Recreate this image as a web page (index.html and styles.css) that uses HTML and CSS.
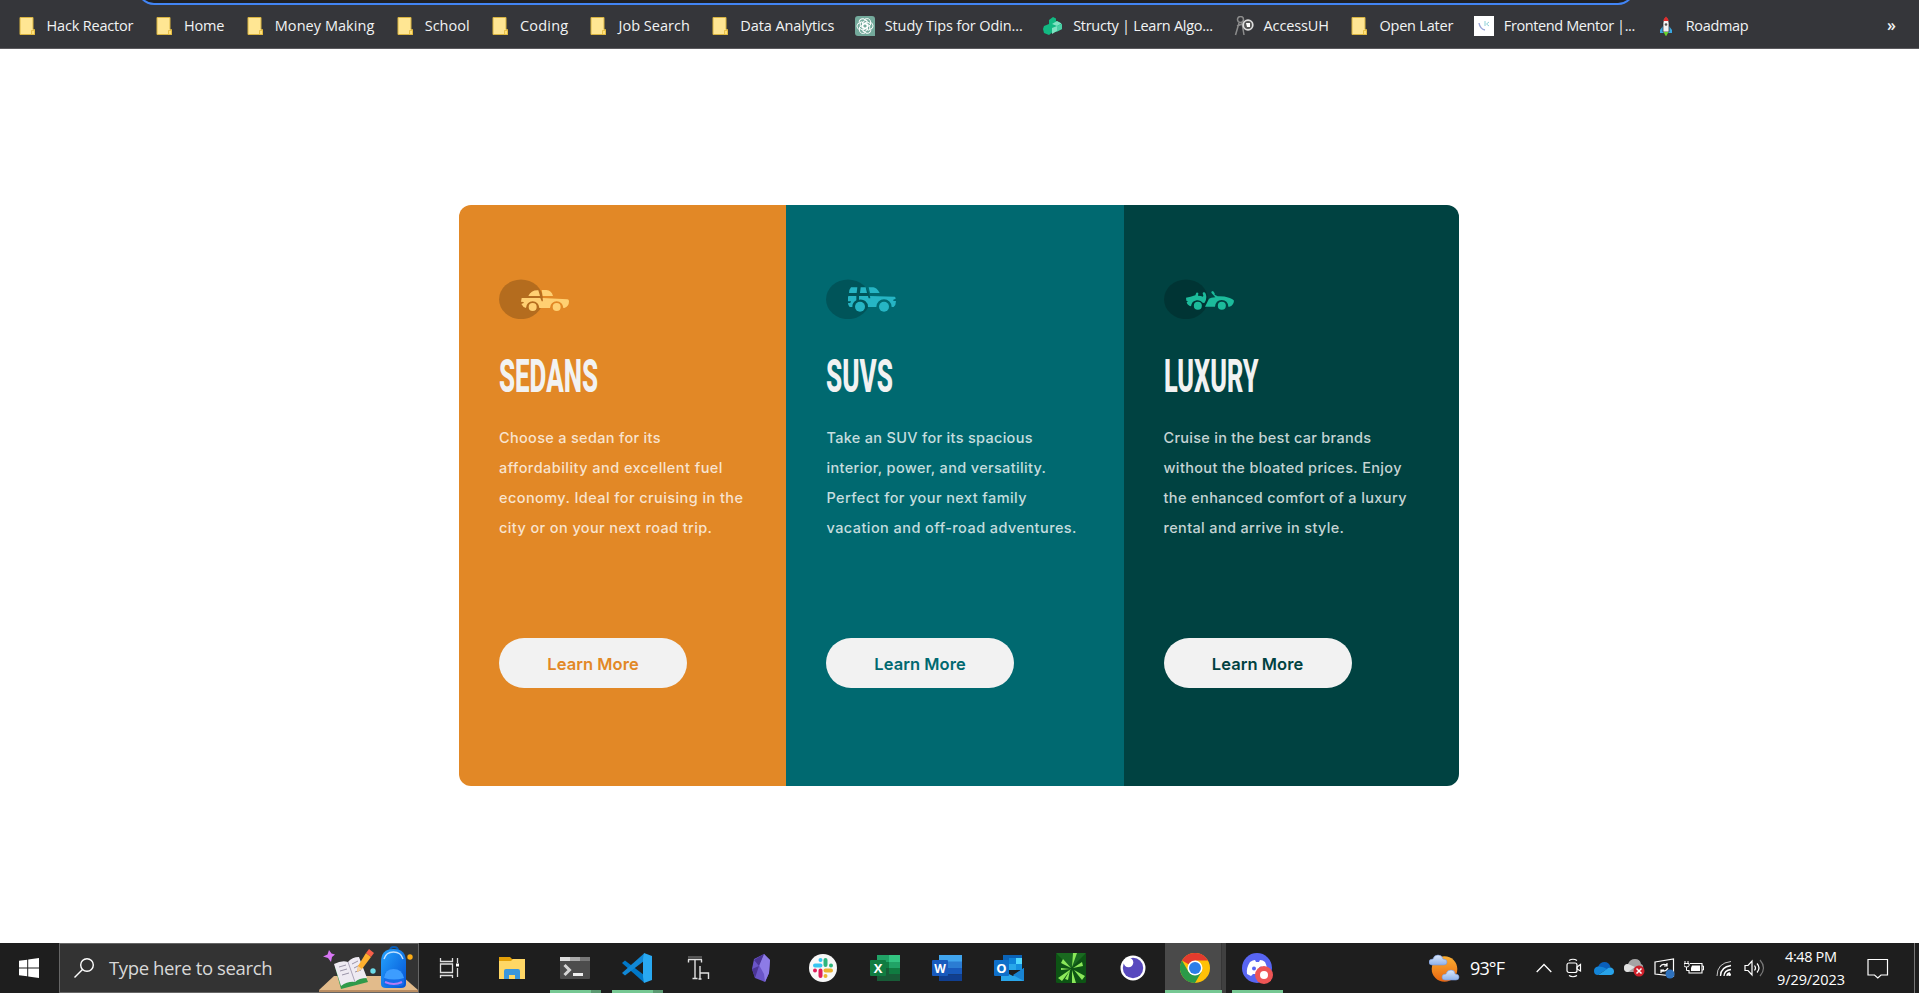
FILE: index.html
```html
<!DOCTYPE html>
<html lang="en">
<head>
<meta charset="utf-8">
<title>3-column preview card</title>
<link rel="stylesheet" href="styles.css">
</head>
<body>
<svg class="defs" width="0" height="0">
  <defs>
    <symbol id="folder" viewBox="0 0 20 20"><path d="M3 1.5h13v12h1.5v5H3z" fill="#ffe693" stroke="#d9b441"/><path d="M14.5 18.5v-4h3v4z" fill="#ffe07a" stroke="#e3b93a" stroke-width=".8"/></symbol>
    <linearGradient id="sun" x1="0" y1="0" x2="0" y2="1"><stop offset="0" stop-color="#fbb034"/><stop offset="1" stop-color="#e8650f"/></linearGradient>
    <linearGradient id="pack" x1="0" y1="0" x2="1" y2="1"><stop offset="0" stop-color="#25a4ff"/><stop offset="1" stop-color="#0452d4"/></linearGradient>
    <linearGradient id="cl" x1="0" y1="0" x2="0" y2="1"><stop offset="0" stop-color="#dce9fb"/><stop offset="1" stop-color="#8fb2ea"/></linearGradient>
  </defs>
</svg>

<header class="browser">
  <div class="urlstrip"><div class="urlbar"></div></div>
  <nav class="bookmarks">
    <a class="bm"><svg class="bi"><use href="#folder"/></svg><span data-w="87">Hack Reactor</span></a>
    <a class="bm"><svg class="bi"><use href="#folder"/></svg><span data-w="40.5">Home</span></a>
    <a class="bm"><svg class="bi"><use href="#folder"/></svg><span data-w="99.5">Money Making</span></a>
    <a class="bm"><svg class="bi"><use href="#folder"/></svg><span data-w="45">School</span></a>
    <a class="bm"><svg class="bi"><use href="#folder"/></svg><span data-w="48">Coding</span></a>
    <a class="bm"><svg class="bi"><use href="#folder"/></svg><span data-w="71.500">Job Search</span></a>
    <a class="bm"><svg class="bi"><use href="#folder"/></svg><span data-w="94">Data Analytics</span></a>
    <a class="bm"><svg class="bi" viewBox="0 0 20 20"><path d="M3 0h14q3 0 3 3v17H3q-3 0-3-3V3q0-3 3-3z" fill="#74aa9c"/><g fill="none" stroke="#fff" stroke-width=".9"><path id="petal" d="M10 3q4-1.500 5.500 2v4L10 12.500 7.500 11V6l3.500-2"/><use href="#petal" transform="rotate(60 10 10)"/><use href="#petal" transform="rotate(120 10 10)"/><use href="#petal" transform="rotate(180 10 10)"/><use href="#petal" transform="rotate(240 10 10)"/><use href="#petal" transform="rotate(300 10 10)"/></g></svg><span data-w="138">Study Tips for Odin...</span></a>
    <a class="bm"><svg class="bi" viewBox="0 0 20 20"><path d="M6 4l4-3 3 1.500V5l4 1.500 2 2V13l-6 3-2-1-5 4-5-2-1-4 1-3 5-2z" fill="#12b982"/><path d="M9 8l5-3 4.500 2.500L14 10zM9 12l5-2v5l-5 3z" fill="#7fe3c2"/><path d="M14 10l5-2v5l-5 2.500z" fill="#4ccfa5"/></svg><span data-w="140">Structy | Learn Algo...</span></a>
    <a class="bm"><svg class="bi" viewBox="0 0 20 20"><g fill="none" stroke="#8c8c8c" stroke-width="1.500"><circle cx="6.500" cy="3.500" r="3"/><path d="M5 7L1.500 19M8 7l2 12M3 10l5-2"/></g><circle cx="14" cy="9" r="4.800" fill="#555" stroke="#ddd" stroke-width="1.700"/><path d="M12 7l1 4h3V7z" fill="#fff"/></svg><span data-w="65.500">AccessUH</span></a>
    <a class="bm"><svg class="bi"><use href="#folder"/></svg><span data-w="74">Open Later</span></a>
    <a class="bm"><svg class="bi" viewBox="0 0 20 20"><path d="M0 0h20v20H0z" fill="#fff"/><path d="M5 7q1 6 6 7" fill="none" stroke="#9aa5d8" stroke-width="1.400"/><path d="M11 5v5m4-4l-2.500 2 2.500 2" fill="none" stroke="#8fd0d8"/></svg><span data-w="131.500">Frontend Mentor |...</span></a>
    <a class="bm"><svg class="bi" viewBox="0 0 20 20"><path d="M7 10l-3 4v3h12v-3l-3-4z" fill="#39a6e0"/><path d="M7 16V7q0-4 3-6 3 2 3 6v9z" fill="#f2f2f2" stroke="#222" stroke-width=".7"/><path d="M7.300 5q.7-3 2.700-4.500Q12 2 12.700 5z" fill="#e02b2b"/><circle cx="10" cy="8.500" r="1.300" fill="#555"/><path d="M7.500 16h5L10 20.500z" fill="#69d32e"/></svg><span data-w="63">Roadmap</span></a>
    <span class="more">»</span>
  </nav>
</header>

<main class="page">
  <div class="cards">
    <section class="card sedan">
      <svg class="car" viewBox="0 0 213 120"><ellipse cx="66" cy="61" rx="66" ry="59.500" fill="#000" opacity=".2"/>
        <g fill="#ffd072"><path d="M88 51Q96 34 115 34h3l5 17zM128 33h14q16 2 20 18h-31z"/><path d="M68 57h56l4 10h4l-1-10 74 4q5 0 5 6 0 16-14 20h-3a20 20 0 0 0-40 0h-32a20 20 0 0 0-40 0q-9-2-14-12l7-3v-3l-8-1z"/><circle cx="101" cy="84" r="12"/><circle cx="173" cy="84" r="12"/></g></svg>
      <h2 class="title"><span data-squeeze="99">SEDANS</span></h2>
      <p class="text"><span data-w="161.500">Choose a sedan for its</span><span data-w="223.500">affordability and excellent fuel</span><span data-w="244">economy. Ideal for cruising in the</span><span data-w="213">city or on your next road trip.</span></p>
      <button class="btn"><span data-w="91.500">Learn More</span></button>
    </section>
    <section class="card suv">
      <svg class="car" viewBox="0 0 213 120"><ellipse cx="66" cy="61" rx="66" ry="59.500" fill="#000" opacity=".2"/>
        <g fill="#26b5c4"><path d="M69 42q1-12 6-17h19l-2 17zM102 42l2-17h15l4 17zM128 25h14q10 1 19 17h-29z"/><path d="M67 51h24v13a22 22 0 0 0-12 20h-8q-5-4-5-12h6q3-2 3-5h-9v-12zM99 51h27l2 7h5l-1-7 74 2q3 1 3 6l-7 3v4h8q0 12-7 18h-6a22 22 0 0 0-46 0h-25a22 22 0 0 0-27-22z"/><circle cx="102" cy="83" r="15"/><circle cx="174" cy="83" r="15"/></g></svg>
      <h2 class="title"><span data-squeeze="67">SUVS</span></h2>
      <p class="text"><span data-w="206">Take an SUV for its spacious</span><span data-w="219.500">interior, power, and versatility.</span><span data-w="200">Perfect for your next family</span><span data-w="250">vacation and off-road adventures.</span></p>
      <button class="btn"><span data-w="91.500">Learn More</span></button>
    </section>
    <section class="card luxury">
      <svg class="car" viewBox="0 0 213 120"><ellipse cx="66" cy="61" rx="66" ry="59.500" fill="#000" opacity=".2"/>
        <g fill="#1cbb9b"><path d="M66 56q13-1 28-7l3-8q4-1 6 1l-1 8q9 0 15 3l1-4-2-5q0-5 5-4 5 2 6 14 0 9-5 17l-5 1q-8-10-19-8-15 2-17 18-11-3-13-12l4-3-5-2z"/><path d="M123 83l12-24q5-3 19-4l-12-14q-1-5 5-5l5 7v4l9 5q18-1 34 4 13 4 15 9-1 14-14 18h-3q-1-19-20-20-18 1-20 20z"/><circle cx="101.500" cy="80.500" r="12"/><circle cx="173.500" cy="80.500" r="12"/></g></svg>
      <h2 class="title"><span data-squeeze="94.500">LUXURY</span></h2>
      <p class="text"><span data-w="207.500">Cruise in the best car brands</span><span data-w="238">without the bloated prices. Enjoy</span><span data-w="243">the enhanced comfort of a luxury</span><span data-w="180.500">rental and arrive in style.</span></p>
      <button class="btn"><span data-w="91.500">Learn More</span></button>
    </section>
  </div>
</main>

<footer class="taskbar">
  <div class="start"><svg width="20" height="20" viewBox="0 0 20 20" fill="#fff"><path d="M0 2.800l8.200-1.100v7.800H0zM9.200 1.500L20 0v9.500H9.200zM0 10.500h8.200v7.800L0 17.200zM9.200 10.500H20V20L9.200 18.500z"/></svg></div>
  <div class="search">
    <svg width="20" height="20" viewBox="0 0 20 20" fill="none" stroke="#fff" stroke-width="1.400"><circle cx="13" cy="7" r="6.300"/><path d="M8.500 11.500L.5 19.500"/></svg>
    <span class="stext" data-w="163.500">Type here to search</span>
    <svg class="art" width="99" height="48" viewBox="0 0 99 48">
      <path d="M0 46L15 32h68l16 14v2H0z" fill="#e2bb8b"/><path d="M0 46h99v2H0z" fill="#b98d62"/>
      <path d="M10 6l2.500 3.500 3.500 1-3 2.500-1 5-3-4-5-1.500 4.500-2z" fill="#d977f5"/>
      <path d="M16 23l12-4 11-5 10 24-27 7z" fill="#2f9a4a"/>
      <path d="M15 20q8-4 14-2 4-5 11-5l8 21q-8 0-12 4-7-1-14 4z" fill="#eeeaf2"/><path d="M29 18l7 20" stroke="#aaa3b8"/><path d="M20 23l7-2M21 27l7-2M23 31l7-2M33 20l6-3M35 24l6-3M36 28l6-2" stroke="#9a94a8"/>
      <path d="M39 22L47 9l5 4-9 12-5 3z" fill="#ffb02e"/><path d="M47 9l3-4 5 4-3 4z" fill="#f8604a"/><path d="M39 22l4 3-5 3z" fill="#f5d0a2"/>
      <circle cx="54" cy="27" r="2.700" fill="#6cdbe8"/><circle cx="91" cy="13" r="2.700" fill="#ffad14"/>
      <path d="M71 7q0-4 4-4t4 4" fill="none" stroke="#075bb5" stroke-width="2"/>
      <path d="M62 18q0-13 12.500-13T87 18v22q0 4-5 4H67q-5 0-5-4z" fill="url(#pack)"/><path d="M65 15q2-7 9.500-7T84 15" fill="none" stroke="#bfe0ff" stroke-width="1.400"/>
      <path d="M65 35q0-10 9.500-10T85 35v4q0 3-4 3H69q-4 0-4-3z" fill="#126be9"/><path d="M65 34q1-9 9.500-9T85 34q-10 3-20 0z" fill="#3d9dff"/><path d="M66 38q9 4 17 0" fill="none" stroke="#b57cf5" stroke-width="2"/>
    </svg>
  </div>
  <div class="apps">
    <div class="app view"><svg width="22" height="20" viewBox="0 0 22 20" stroke="#ddd" fill="none" stroke-width="1.300"><path d="M1.500 0v3.500h12V0M1.500 6h12v8.500h-12zM1.500 20v-2.500h12V20M18.500 0v5M18.500 10v9"/><path d="M17 5.500h3v3h-3z" fill="#fff" stroke="none"/></svg></div>
    <div class="app"><svg width="28" height="24" viewBox="0 0 28 24"><path d="M0 1h11l2 2h13v4H0z" fill="#e3a008"/><path d="M0 5h12l2-2h12v20H0z" fill="#ffd765"/><path d="M5 23v-8q0-2 2-2h12q2 0 2 2v8h-5v-4h-6v4z" fill="#3a96dd"/></svg></div>
    <div class="app on"><svg width="30" height="22" viewBox="0 0 30 22"><rect width="30" height="22" rx="1" fill="#4c4c4c"/><path d="M0 0h10v4H0z" fill="#ddd"/><path d="M10 0h10v4H10z" fill="#aaa"/><path d="M20 0h10v4H20z" fill="#777"/><path d="M4.500 8l5 5-5 5" fill="none" stroke="#d5d5d5" stroke-width="3"/><path d="M13 16h10v3H13z" fill="#eee"/></svg></div>
    <div class="app on"><svg width="30" height="30" viewBox="0 0 30 30"><path d="M0 10l3-2.500L22 22v7.500z" fill="#0078c8"/><path d="M0 20l3 2.500L22 8V.500z" fill="#1188d6"/><path d="M22 0l8 3v24l-8 3-1-6V6z" fill="#29a9f2"/></svg></div>
    <div class="app"><svg width="24" height="25" viewBox="0 0 24 25"><path d="M1 1h14" stroke="#555" stroke-width="2"/><path d="M1 3.500h14M8 4v18M5.500 22.500h5M1.500 3.500v3M14.500 3.500v3M13 10v13M13 17h8.500v6M11.500 23h3" fill="none" stroke="#e1e1e1" stroke-width="1.400"/></svg></div>
    <div class="app"><svg width="18" height="28" viewBox="0 0 18 28"><path d="M12 0l6 6-1 13-4 9-10-4-3-9 2-10z" fill="#6a55c8"/><path d="M12 0l6 6-1 13-4 9-1-8-5-9z" fill="#8d7be6"/><path d="M12 0L2 6l5 6zM0 15l7-3-4 12z" fill="#4b3597"/></svg></div>
    <div class="app"><svg width="28" height="28" viewBox="0 0 28 28"><circle cx="14" cy="14" r="14" fill="#f8f8f8"/><g stroke-width="4" stroke-linecap="round"><path d="M11.500 6v.1M6 11.500h5.500" stroke="#36c5f0"/><path d="M16.500 6v5M22 11.500v.1" stroke="#2eb67d"/><path d="M16.500 16.500H22M16.500 22v.1" stroke="#ecb22e"/><path d="M6 16.500v.1M11.500 16.500V22" stroke="#e01e5a"/></g></svg></div>
    <div class="app"><svg width="30" height="26" viewBox="0 0 30 26"><path d="M7 0h23v26H7z" fill="#185c37"/><path d="M7 0h12v7H7z" fill="#21a366"/><path d="M19 0h11v7H19z" fill="#33c481"/><path d="M7 7h12v6H7z" fill="#107c41"/><path d="M19 7h11v6H19z" fill="#21a366"/><path d="M19 13h11v6H19z" fill="#107c41"/><rect y="5" width="16" height="16" rx="1" fill="#107c41"/><text class="glyph" x="8" y="17.500" font-size="13">X</text></svg></div>
    <div class="app"><svg width="30" height="26" viewBox="0 0 30 26"><path d="M7 0h23v7H7z" fill="#41a5ee"/><path d="M7 6.500h23V13H7z" fill="#2b7cd3"/><path d="M7 13h23v6.500H7z" fill="#185abd"/><path d="M7 19.500h23V26H7z" fill="#103f91"/><rect y="5" width="16" height="16" rx="1" fill="#185abd"/><text class="glyph" x="8" y="17.500" font-size="12">W</text></svg></div>
    <div class="app"><svg width="30" height="26" viewBox="0 0 30 26"><path d="M9 0h19v15H9z" fill="#0a63b8"/><path d="M15 3h7v6h-7z" fill="#0f84da"/><path d="M22 3h6v6h-6z" fill="#50d9ff"/><path d="M15 9h7v6h-7z" fill="#28a8ea"/><path d="M22 9h6v6h-6z" fill="#1490df"/><path d="M7 15l12 6 11-8v13H7z" fill="#2aa6ea"/><path d="M19 20l11-7v13z" fill="#1883d2"/><rect y="5" width="15" height="16" rx="1" fill="#0f6fc9"/><text class="glyph" x="7.500" y="17.500" font-size="13">O</text></svg></div>
    <div class="app"><svg width="30" height="30" viewBox="0 0 30 30"><rect width="30" height="30" rx="1.500" fill="#0d5414"/><path d="M0 0h30L15 15z" fill="#1a6a20"/><g fill="#8be85a"><path d="M16 14L17 0h4zM15 15L7 6l-2 4zM15 16L2 25l4 3zM17 15l9-6 1 4zM18 17l11 6-3 4zM16 17l4 13h-4zM14 17l-2 10-3-1zM14 16l-9-1v2z"/></g></svg></div>
    <div class="app"><svg width="26" height="26" viewBox="0 0 26 26"><circle cx="13" cy="13" r="12.500" fill="#fff"/><circle cx="13" cy="13" r="10.200" fill="#5849be"/><circle cx="8.500" cy="7.500" r="4.800" fill="#fff"/></svg></div>
    <div class="app active"><svg width="30" height="30" viewBox="0 0 30 30"><circle cx="15" cy="15" r="15" fill="#ffc107"/><path d="M15 15L2 7.500A15 15 0 0 1 28 7.500H15z" fill="#e33b2e"/><path d="M2 7.500A15 15 0 0 0 15 30l6.500-11.300L15 15 8.500 18.700z" fill="#2b9a48"/><circle cx="15" cy="15" r="7.500" fill="#fff"/><circle cx="15" cy="15" r="6" fill="#2b7de9"/></svg></div>
    <div class="app on solo"><svg width="31" height="31" viewBox="0 0 31 31"><circle cx="15" cy="15" r="15" fill="#5865f2"/><path d="M8 9q3-2 5-2l1 2h3l1-2q3 0 5 2 3 6 2 12l-4 2-2-2h-8l-2 2-4-2q-1-6 3-12z" fill="#fff"/><circle cx="12" cy="15.500" r="2" fill="#5865f2"/><circle cx="19" cy="15.500" r="2" fill="#5865f2"/><circle cx="22" cy="22" r="9" fill="#ed5555"/><circle cx="22" cy="22" r="4" fill="#fff"/></svg></div>
  </div>
  <div class="weather"><svg width="31" height="29" viewBox="0 0 31 29"><circle cx="15.500" cy="15" r="12.800" fill="url(#sun)"/><path d="M3 11q-3 0-3-3t4-3q1-4 5-4t5 4q4 0 4 3t-3 3z" fill="url(#cl)" stroke="#7899da" stroke-width=".6"/><path d="M16 26q-3 0-3-3t4-3q1-4 5-4t4 4q4 0 4 3t-3 3z" fill="url(#cl)" stroke="#7899da" stroke-width=".6"/></svg><span data-w="35">93°F</span></div>
  <div class="tray">
    <i><svg width="16" height="10" viewBox="0 0 16 10"><path d="M.7 9L8 1.500 15.300 9" fill="none" stroke="#fff" stroke-width="1.300"/></svg></i>
    <i><svg width="16" height="20" viewBox="0 0 16 20" fill="none" stroke="#fff" stroke-width="1.200"><rect x="1" y="5" width="10" height="9.500" rx="2"/><path d="M11 9l3.500-2.500v6.500L11 11zM3 2.500Q7 0 11 2.500M3 17.500q4 2.500 8 0"/></svg></i>
    <i><svg width="20" height="13" viewBox="0 0 20 13"><path d="M4 5Q6 0 10.500 0t6 5l-5 4z" fill="#0a5fbb"/><path d="M4 4.500q-4 .5-4 4.500 0 4 4 4l9-6q-4-3-9-2.500z" fill="#1384d8"/><path d="M4 13l9-6q1-2 4-1.500 3 1 3 4T17 13z" fill="#28a3ea"/></svg></i>
    <i><svg width="21" height="18" viewBox="0 0 21 18"><path d="M4 13q-4 0-4-4t4-4q2-5 7-5t6 5q3 1 2 5l-6 3z" fill="#a5a5a5"/><path d="M4 13q-4 0-4-4t4-4l7 3z" fill="#e0e0e0"/><circle cx="15" cy="12" r="5.500" fill="#d0202b"/><path d="M12.500 9.500l5 5m0-5l-5 5" stroke="#fff" stroke-width="1.500"/></svg></i>
    <i><svg width="21" height="21" viewBox="0 0 21 21"><path d="M1 4l18.500-3v17L1 16z" fill="none" stroke="#fff" stroke-width="1.200"/><path d="M6 9q2-4 7-2m0-2v3h-3M14 10q-2 4-7 3m0 2v-3h3" fill="none" stroke="#fff" stroke-width="1.200"/><circle cx="16" cy="16" r="4.500" fill="#2f72bd"/></svg></i>
    <i><svg width="20" height="14" viewBox="0 0 20 14"><path d="M6 2.500h12V12H5V9" fill="none" stroke="#fff" stroke-width="1.100"/><path d="M8 4.500h8V10H7V7z" fill="#fff"/><path d="M18 5h1.500v4H18M1 0v3M4 0v3M0 2.500h5v2Q5 6 2.500 6T0 4.500zM2.500 6v3.500H5" fill="none" stroke="#fff"/></svg></i>
    <i><svg width="16" height="17" viewBox="0 0 16 17" fill="none" stroke="#fff"><path d="M1 16Q1 3 15 1.500" opacity=".75"/><path d="M4.500 16q0-9 10.500-10.500M8 16q0-5.500 7-6.500M11 16q0-3 3-3" stroke-width="1.300"/><circle cx="13.500" cy="14.500" r="1.500" fill="#fff" stroke="none"/></svg></i>
    <i><svg width="21" height="18" viewBox="0 0 21 18" fill="none" stroke="#fff" stroke-width="1.200"><path d="M1 6.500h3l4-4.500v14l-4-4.500H1zM10.500 6.500q2 2.500 0 5"/><path d="M13 4.500q4 4.500 0 9"/><path d="M16 1q7 8 0 16" opacity=".4"/></svg></i>
  </div>
  <div class="clock"><span data-w="52">4:48 PM</span><span data-w="68">9/29/2023</span></div>
  <div class="notify"><svg width="22" height="21" viewBox="0 0 22 21"><path d="M1 1.500h19.500v15.500h-6.500l-3.200 3-3.300-3H1z" fill="none" stroke="#fff" stroke-width="1.200"/></svg></div>
  <div class="peek"></div>
</footer>
<script src="fit.js"></script>
</body>
</html>
```
FILE: styles.css
```css
* { box-sizing: border-box; }
body { margin: 0; width: 1919px; height: 993px; display: flex; flex-direction: column; overflow: hidden; background: #fff; font-family: "Open Sans", "Noto Sans", sans-serif; }
svg { display: block; flex: none; }
.defs { position: absolute; }
span[data-w], span[data-squeeze] { white-space: nowrap; display: block; }

.browser { height: 49px; background: #35363a; border-bottom: 1px solid #5b5a5e; }
.urlstrip { height: 5px; overflow: hidden; display: flex; align-items: flex-end; padding-left: 137px; }
.urlbar { flex: none; width: 1498px; height: 34px; border: 2px solid #4285f4; border-radius: 17px; background: #202124; }
.bookmarks { display: flex; align-items: center; height: 42px; padding: 0 23px 0 16.5px; color: #f1f3f4; font-size: 14.5px; line-height: 20px; }
.bm { display: flex; align-items: center; gap: 10px; margin-right: 20.4px; }
.bi { width: 20px; height: 20px; }
.more { margin-left: auto; font-size: 16px; font-weight: 600; padding-bottom: 3px; }

.page { flex: 1; padding: 156.4px 460px 0 459px; }
.cards { display: grid; grid-template-columns: 327px 338px 335px; height: 581px; border-radius: 12px; overflow: hidden; }
.card { display: flex; flex-direction: column; align-items: flex-start; padding: 73.6px 0 0 40px; }
.sedan { background: #e28826; color: #e28826; }
.suv { background: #006970; color: #006970; }
.luxury { background: #004241; color: #004241; padding-left: 39.5px; }
.car { width: 71px; height: 40px; }
.title { margin: 33px 0 0; height: 48px; font: 800 46px/48px Roboto, sans-serif; color: #f2f2f2; }
.title span { transform-origin: 0 50%; }
.text { margin: 23px 0 0; font: 450 14.5px/30px Inter, sans-serif; color: rgba(255, 255, 255, .78); }
.suv .text { margin-left: .5px; }
.btn { margin-top: 95.4px; width: 188px; height: 50px; padding: 2px 0 0; border: 0; border-radius: 25px; background: #f2f2f2; color: inherit; display: flex; align-items: center; justify-content: center; font: 600 16.5px/22px Inter, sans-serif; }

.taskbar { height: 50px; background: #1e1e1e; display: flex; color: #fff; }
.start { width: 59px; display: grid; place-items: center; padding-right: 1px; }
.search { width: 360px; display: flex; align-items: center; background: #333; border: 1px solid #666; padding-left: 14px; }
.stext { margin-left: 15px; font-size: 18.5px; color: #d8d8d8; padding-bottom: 1px; }
.art { margin-left: auto; }
.apps { display: flex; }
.app { width: 62px; height: 50px; display: grid; place-items: center; }
.app.view { width: 63px; padding-right: 2px; }
.app.on, .app.active { background: linear-gradient(90deg, #76c893 41px, #5b9a72 41px) 6px 47px / 51px 3px no-repeat; }
.app.solo { background: linear-gradient(#76c893, #76c893) 6px 47px / 51px 3px no-repeat; }
.app.active { background: linear-gradient(#76c893, #76c893) 1px 47px / 57px 3px no-repeat, linear-gradient(90deg, transparent 1px, #4a4a4a 1px, #4a4a4a 57px, #2c2c2c 57px, #404040 58px); }
.weather { margin-left: 141px; display: flex; align-items: center; gap: 10px; font-size: 18px; }
.tray { margin-left: 24px; display: flex; }
.tray i { width: 30px; display: grid; place-items: center; }
.clock { width: 84px; display: flex; flex-direction: column; align-items: center; font-size: 14.5px; line-height: 23px; padding-top: 2px; }
.notify { width: 50px; display: grid; place-items: center; }
.peek { margin-left: auto; width: 5.500px; border-left: 1px solid #777; }
.glyph { font-family: "Open Sans", sans-serif; font-weight: 700; fill: #fff; text-anchor: middle; }
```
FILE: fit.js
```js
// Tracks each label out to its nominal width.
document.querySelectorAll('[data-w]').forEach(function (el) {
  var w = parseFloat(el.dataset.w), n = el.textContent.length;
  el.style.width = 'max-content';
  var natural = el.getBoundingClientRect().width;
  el.style.letterSpacing = (w - natural) / (n - 1) + 'px';
  el.style.width = w + 'px';
});
// Condenses the display headings horizontally.
document.querySelectorAll('[data-squeeze]').forEach(function (el) {
  el.style.width = 'max-content';
  var natural = el.getBoundingClientRect().width;
  el.style.transform = 'scaleX(' + parseFloat(el.dataset.squeeze) / natural + ')';
});
```
